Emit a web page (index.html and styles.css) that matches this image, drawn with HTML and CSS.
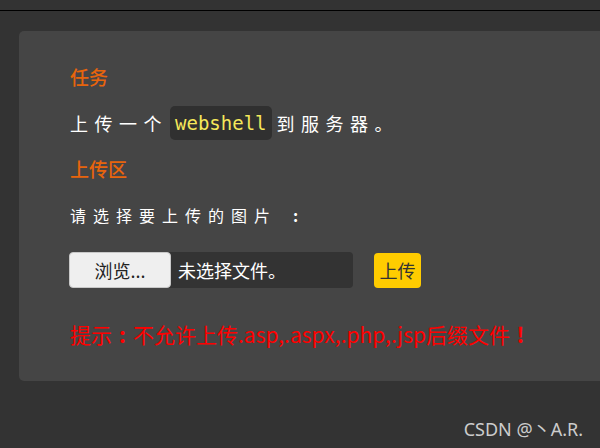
FILE: index.html
```html
<!DOCTYPE html>
<html lang="zh-CN">
<head>
<meta charset="utf-8">
<title>upload</title>
<link rel="stylesheet" href="styles.css">
</head>
<body>
<div class="topbar"></div>
<div class="panel">
  <h3 class="title">任务</h3>
  <p class="task"><span class="wide">上传一个</span><code class="chip">webshell</code><span class="wide">到服务器。</span></p>
  <h3 class="title area">上传区</h3>
  <p class="prompt">请选择要上传的图片 <span class="punct">:</span></p>
  <div class="form-row">
    <div class="file">
      <span class="browse">浏览...</span>
      <span class="fname">未选择文件。</span>
    </div>
    <span class="submit">上传</span>
  </div>
  <p class="tip">提示<span class="punct">:</span>不允许上传.asp,.aspx,.php,.jsp后缀文件<span class="punct">!</span></p>
</div>
<div class="footer">CSDN @丶A.R.</div>
</body>
</html>
```
FILE: styles.css
```css
* { box-sizing: border-box; }
html, body { margin: 0; padding: 0; }
body {
  background: #333333;
  font-family: "Noto Sans CJK SC", "Noto Sans", sans-serif;
  color: #ffffff;
  width: 600px;
  height: 448px;
  overflow: hidden;
}
.topbar {
  height: 11px;
  border-bottom: 1px solid #000;
  background: #333;
}
.panel {
  margin: 20px 0 0 19px;
  width: 581px;
  height: 350px;
  background: #454545;
  border-radius: 5px 0 0 5px;
  padding: 34px 0 0 51px;
}
.title {
  margin: 0;
  font-size: 19px;
  line-height: 24px;
  font-weight: 500;
  color: #e8640c;
}
.task {
  margin: 17px 0 0;
  height: 34px;
  display: flex;
  align-items: center;
  font-size: 18px;
}
.wide { letter-spacing: 6.5px; font-family: "Noto Sans CJK JP", "Noto Sans CJK SC", sans-serif; }
.punct {
  display: inline-block;
  width: 1em;
  text-align: center;
  letter-spacing: 0;
  font-weight: bold;
}
.chip {
  font-family: "DejaVu Sans Mono", monospace;
  font-size: 19px;
  color: #f5e85a;
  background: #303030;
  border-radius: 5px;
  height: 34px;
  line-height: 34px;
  padding: 0 5px;
  margin: 0 5px 0 2px;
}
.area { margin-top: 17px; }
.prompt {
  margin: 22px 0 0;
  font-family: "Noto Sans CJK JP", "Noto Sans CJK SC", sans-serif;
  font-size: 16px;
  line-height: 24px;
  letter-spacing: 7px;
}
.form-row {
  margin-top: 25px;
  display: flex;
  align-items: center;
  height: 36px;
}
.file {
  display: flex;
  height: 36px;
  width: 283px;
  background: #333;
  border-radius: 4px;
}
.browse {
  width: 102px;
  height: 36px;
  margin-left: -1px;
  background: #efefef;
  border: 1px solid #c8c8c8;
  border-radius: 4px;
  color: #222;
  font-size: 18px;
  display: flex;
  align-items: center;
  justify-content: center;
}
.fname {
  padding-left: 7px;
  font-family: "Noto Sans CJK JP", "Noto Sans CJK SC", sans-serif;
  font-size: 18px;
  display: flex;
  align-items: center;
}
.submit {
  margin-left: 21px;
  width: 47px;
  height: 35px;
  background: #ffcc00;
  border-radius: 4px;
  color: #333;
  font-size: 18px;
  display: flex;
  align-items: center;
  justify-content: center;
}
.tip {
  margin: 34px 0 0;
  font-family: "Noto Sans CJK JP", "Noto Sans CJK SC", sans-serif;
  color: #ff0000;
  font-size: 21px;
  line-height: 24px;
}
.footer {
  text-align: right;
  padding-right: 17px;
  margin-top: 36px;
  font-family: "Noto Sans", "Noto Sans CJK SC", sans-serif;
  font-size: 18px;
  color: #cccccc;
  line-height: 24px;
}
```
